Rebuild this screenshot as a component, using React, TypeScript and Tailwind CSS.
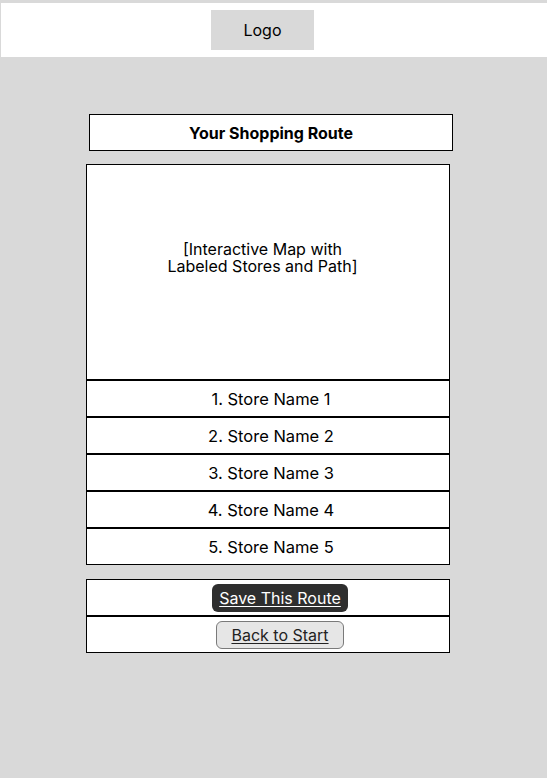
const stores = [
  "1. Store Name 1",
  "2. Store Name 2",
  "3. Store Name 3",
  "4. Store Name 4",
  "5. Store Name 5",
];

export default function App() {
  return (
    <div
      className="min-h-[778px] w-[547px] bg-[#d9d9d9] pt-[3px] pl-[1px] text-black"
      style={{ fontFamily: "Inter, 'Noto Sans', sans-serif" }}
    >
      <header className="flex h-[54px] items-start bg-white pt-[7px]">
        <div className="ml-[210px] flex h-[40px] w-[103px] items-center justify-center bg-[#d9d9d9] text-base">
          Logo
        </div>
      </header>

      <div className="ml-[88px] mt-[57px] flex h-[37px] w-[364px] items-center justify-center border border-black bg-white text-base font-bold">
        Your Shopping Route
      </div>

      <div className="ml-[85px] mt-[13px] w-[364px]">
        <div className="flex h-[216px] flex-col items-center justify-center border border-black bg-white pr-[11px] pb-[28px] text-center text-base leading-[17px]">
          <span>[Interactive Map with</span>
          <span>Labeled Stores and Path]</span>
        </div>
        {stores.map((name) => (
          <div
            key={name}
            className="flex h-[37px] items-center justify-center border border-black bg-white pl-[6px] pt-[2px] text-[16.5px]"
          >
            {name}
          </div>
        ))}

        <div className="mt-[14px] flex h-[37px] items-center justify-center border border-black bg-white pl-[24px]">
          <button className="h-[28px] w-[136px] rounded-[6px] bg-[#2e2e2e] text-base text-white underline underline-offset-2">
            Save This Route
          </button>
        </div>
        <div className="flex h-[37px] items-center justify-center border border-black bg-white pl-[24px]">
          <button className="h-[28px] w-[128px] rounded-[6px] border border-[#7a7a7a] bg-[#e6e6e6] text-base text-[#222] underline underline-offset-2">
            Back to Start
          </button>
        </div>
      </div>
    </div>
  );
}
